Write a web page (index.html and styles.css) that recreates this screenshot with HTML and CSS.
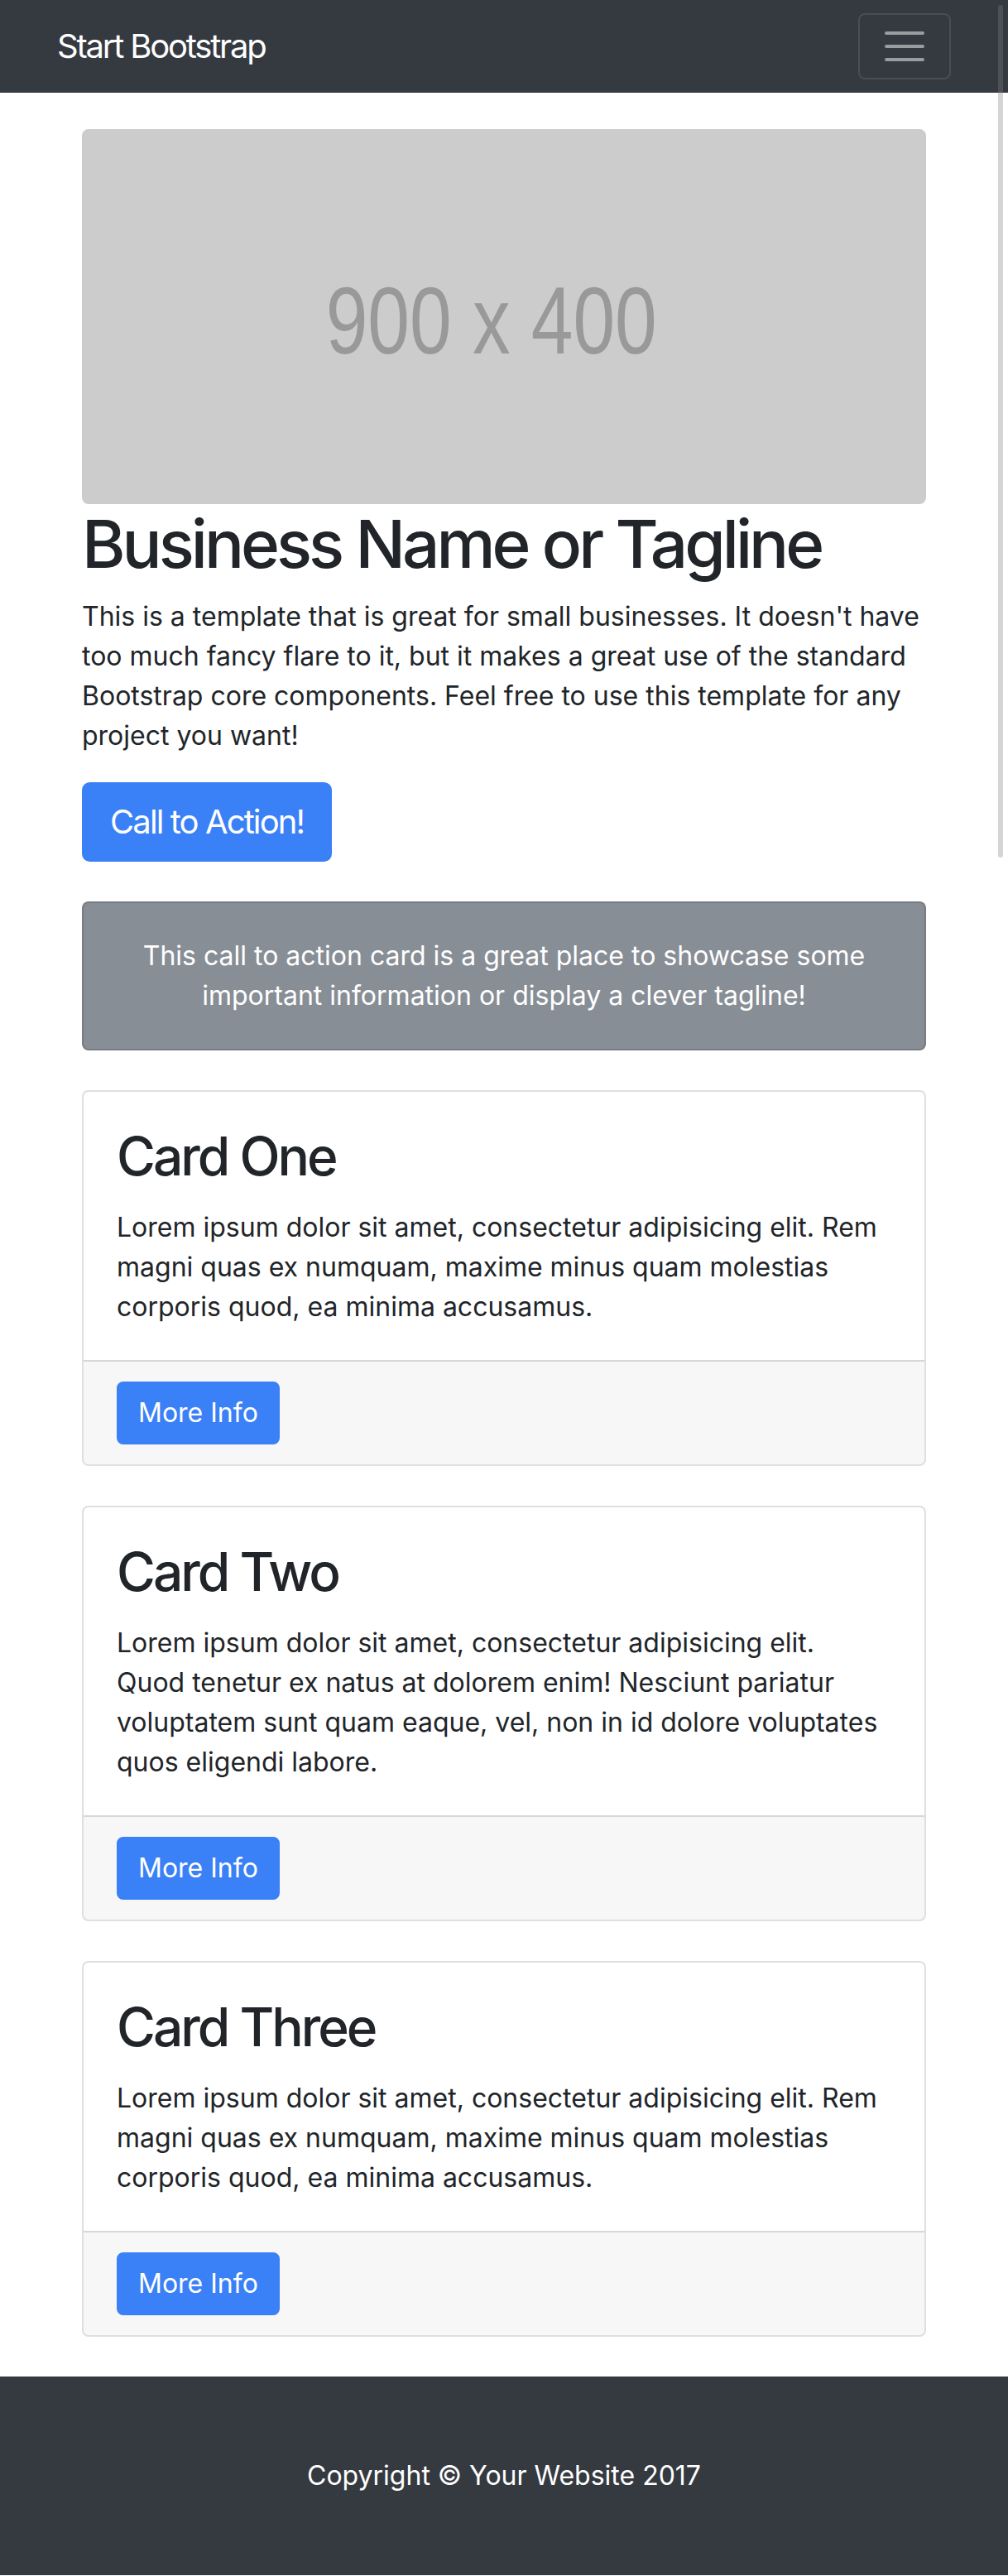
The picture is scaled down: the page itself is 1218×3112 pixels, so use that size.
FILE: index.html
```html
<!DOCTYPE html>
<html lang="en">
<head>
<meta charset="utf-8">
<title>Small Business - Start Bootstrap Template</title>
<link rel="stylesheet" href="styles.css">
</head>
<body>
<nav class="navbar">
  <div class="nav-inner">
    <a class="brand" href="#">Start Bootstrap</a>
    <button class="toggler" type="button" aria-label="Toggle navigation">
      <svg class="toggler-icon" viewBox="0 0 30 30" width="60" height="60" aria-hidden="true"><path d="M4 7h22M4 15h22M4 23h22" fill="none" stroke="rgba(255,255,255,0.5)" stroke-width="2" stroke-linecap="round" stroke-miterlimit="10"/></svg>
    </button>
  </div>
</nav>

<main class="container">
  <section class="hero">
    <div class="hero-img">
      <svg class="hero-svg" viewBox="0 0 900 400" preserveAspectRatio="none" aria-label="900 x 400"><text x="260" y="239" textLength="353" lengthAdjust="spacingAndGlyphs">900 x 400</text></svg>
    </div>
    <h1 class="hero-title">Business Name or Tagline</h1>
    <p class="hero-text">This is a template that is great for small businesses. It doesn't have<br>too much fancy flare to it, but it makes a great use of the standard<br>Bootstrap core components. Feel free to use this template for any<br>project you want!</p>
    <a class="btn btn-lg" href="#">Call to Action!</a>
  </section>

  <div class="cta-card">
    <p>This call to action card is a great place to showcase some<br>important information or display a clever tagline!</p>
  </div>

  <article class="card">
    <div class="card-body">
      <h2 class="card-title">Card One</h2>
      <p class="card-text">Lorem ipsum dolor sit amet, consectetur adipisicing elit. Rem<br>magni quas ex numquam, maxime minus quam molestias<br>corporis quod, ea minima accusamus.</p>
    </div>
    <div class="card-footer"><a class="btn" href="#">More Info</a></div>
  </article>

  <article class="card">
    <div class="card-body">
      <h2 class="card-title">Card Two</h2>
      <p class="card-text">Lorem ipsum dolor sit amet, consectetur adipisicing elit.<br>Quod tenetur ex natus at dolorem enim! Nesciunt pariatur<br>voluptatem sunt quam eaque, vel, non in id dolore voluptates<br>quos eligendi labore.</p>
    </div>
    <div class="card-footer"><a class="btn" href="#">More Info</a></div>
  </article>

  <article class="card">
    <div class="card-body">
      <h2 class="card-title">Card Three</h2>
      <p class="card-text">Lorem ipsum dolor sit amet, consectetur adipisicing elit. Rem<br>magni quas ex numquam, maxime minus quam molestias<br>corporis quod, ea minima accusamus.</p>
    </div>
    <div class="card-footer"><a class="btn" href="#">More Info</a></div>
  </article>
</main>

<footer class="footer">
  <p>Copyright &copy; Your Website 2017</p>
</footer>

<div class="scroll-thumb" aria-hidden="true"></div>
</body>
</html>
```

FILE: styles.css
```css
* { box-sizing: border-box; }

body {
  margin: 0;
  font-family: Inter, "Liberation Sans", sans-serif;
  font-size: 32px;
  line-height: 1.5;
  color: #212529;
  background: #fff;
}

/* navbar */
.navbar {
  background: #353a41;
  padding: 16px 32px;
}
.nav-inner {
  max-width: 1080px;
  margin: 0 auto;
  display: flex;
  align-items: center;
  justify-content: space-between;
}
.brand {
  color: #fff;
  text-decoration: none;
  font-size: 40px;
  line-height: 60px;
  padding: 10px 0;
  letter-spacing: -2.2px;
}
.toggler {
  display: flex;
  padding: 8px 24px;
  background: transparent;
  border: 2px solid rgba(255, 255, 255, 0.1);
  border-radius: 8px;
}
.toggler-icon { display: block; }

/* main */
.container {
  max-width: 1080px;
  margin: 0 auto;
  padding: 44px 30px 48px;
  display: flex;
  flex-direction: column;
  gap: 48px;
}

.hero {
  display: flex;
  flex-direction: column;
  align-items: flex-start;
}
.hero-img {
  align-self: stretch;
  aspect-ratio: 900 / 400;
  background: #cccccc;
  border-radius: 8px;
  overflow: hidden;
}
.hero-svg {
  display: block;
  width: 100%;
  height: 100%;
}
.hero-svg text {
  font-family: "Liberation Sans", Arial, sans-serif;
  font-size: 101px;
  fill: #999999;
}
.hero-title {
  margin: 0 0 16px;
  font-size: 80px;
  line-height: 96px;
  font-weight: 500;
  letter-spacing: -4px;
}
.hero-text {
  margin: 0 0 32px;
}

.btn {
  display: inline-block;
  background: #3a80f6;
  border: 2px solid #3a80f6;
  color: #fff;
  text-decoration: none;
  font-size: 32px;
  line-height: 48px;
  padding: 12px 24px;
  border-radius: 8px;
}
.btn-lg {
  font-size: 40px;
  line-height: 60px;
  padding: 16px 32px;
  border-radius: 9.6px;
  letter-spacing: -1.9px;
}

/* call to action card */
.cta-card {
  background: #888e96;
  border: 2px solid rgba(0, 0, 0, 0.125);
  border-radius: 8px;
  padding: 40px;
  color: #fff;
  text-align: center;
}
.cta-card p { margin: 0; }

/* cards */
.card {
  border: 2px solid rgba(0, 0, 0, 0.125);
  border-radius: 8px;
  overflow: hidden;
  background: #fff;
}
.card-body {
  padding: 40px;
}
.card-title {
  margin: 0 0 24px;
  font-size: 64px;
  line-height: 76px;
  font-weight: 500;
  letter-spacing: -3px;
}
.card-text { margin: 0; }
.card-footer {
  display: flex;
  padding: 24px 40px;
  background: rgba(0, 0, 0, 0.03);
  border-top: 2px solid rgba(0, 0, 0, 0.125);
}

/* footer */
.footer {
  background: #353a41;
  padding: 96px 0;
  color: #fff;
  text-align: center;
}
.footer p { margin: 0; }

/* overlay scrollbar thumb */
.scroll-thumb {
  position: fixed;
  top: 6px;
  right: 6px;
  width: 6px;
  height: 1030px;
  border-radius: 3px;
  background: rgba(128, 128, 128, 0.33);
  pointer-events: none;
}
```
